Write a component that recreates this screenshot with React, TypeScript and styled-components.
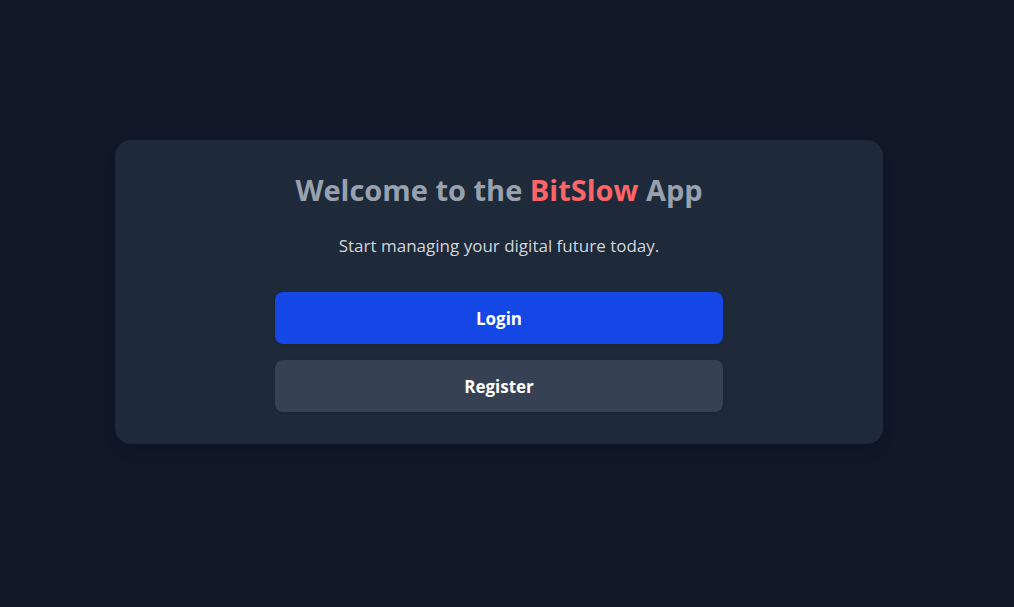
import React from "react";
import styled, { createGlobalStyle } from "styled-components";

const Global = createGlobalStyle`
  html, body { margin: 0; padding: 0; background: #101828; }
  body { font-family: "Open Sans", "Noto Sans", sans-serif; -webkit-font-smoothing: antialiased; }
  * { box-sizing: border-box; }
`;

const Page = styled.div`
  min-height: 607px;
  background: #101828;
  display: flex;
  justify-content: center;
  align-items: flex-start;
  padding: 140px 16px 0 0;
`;

const Card = styled.div`
  width: 768px;
  background: #1e2939;
  border-radius: 16px;
  padding: 32px;
  box-shadow: 0 10px 15px -3px rgba(0,0,0,0.1), 0 4px 6px -4px rgba(0,0,0,0.1);
  display: flex;
  flex-direction: column;
  align-items: center;
`;

const Title = styled.h1`
  margin: 0;
  font-size: 29px;
  line-height: 36px;
  font-weight: 700;
  color: #99a1af;
  text-align: center;
`;

const Brand = styled.span`
  color: #ff6467;
`;

const Subtitle = styled.p`
  margin: 24px 0 32px;
  font-size: 17px;
  line-height: 28px;
  color: #d1d5dc;
  text-align: center;
`;

const Actions = styled.div`
  width: 448px;
  display: flex;
  flex-direction: column;
  gap: 16px;
`;

const Button = styled.button<{ $variant: "primary" | "secondary" }>`
  width: 100%;
  height: 52px;
  border: none;
  border-radius: 8px;
  font-family: inherit;
  font-size: 17px;
  font-weight: 700;
  color: #ffffff;
  cursor: pointer;
  background: ${(p) => (p.$variant === "primary" ? "#1447e6" : "#364153")};
  box-shadow: 0 1px 3px rgba(0,0,0,0.1), 0 1px 2px -1px rgba(0,0,0,0.1);
`;

export default function App() {
  return (
    <>
      <Global />
      <Page>
        <Card>
          <Title>
            Welcome to the <Brand>BitSlow</Brand> App
          </Title>
          <Subtitle>Start managing your digital future today.</Subtitle>
          <Actions>
            <Button $variant="primary">Login</Button>
            <Button $variant="secondary">Register</Button>
          </Actions>
        </Card>
      </Page>
    </>
  );
}
